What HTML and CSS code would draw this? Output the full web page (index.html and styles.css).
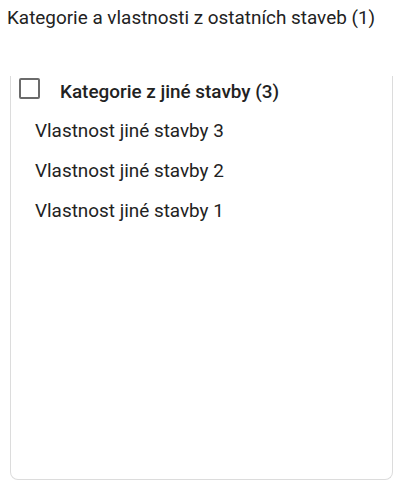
FILE: index.html
```html
<!DOCTYPE html>
<html>
<head>
<meta charset="utf-8">
<link rel="stylesheet" href="styles.css">
</head>
<body>
<div class="title">Kategorie a vlastnosti z ostatních staveb (1)</div>
<div class="panel">
  <div class="group-row">
    <span class="checkbox"></span>
    <span class="group-label">Kategorie z jiné stavby (3)</span>
  </div>
  <div class="item">Vlastnost jiné stavby 3</div>
  <div class="item">Vlastnost jiné stavby 2</div>
  <div class="item">Vlastnost jiné stavby 1</div>
</div>
</body>
</html>
```
FILE: styles.css
```css
html, body {
  margin: 0;
  padding: 0;
  background: #ffffff;
}
body {
  font-family: Roboto, "Liberation Sans", sans-serif;
  color: #222222;
  font-size: 18.9px;
}
.title {
  padding: 7px 0 0 7px;
  line-height: 22px;
  height: 22px;
}
.panel {
  margin: 47px 0 0 10px;
  width: 381px;
  height: 403px;
  border: 1px solid #dcdcdc;
  border-top: none;
  border-radius: 0 0 8px 8px;
}
.group-row {
  display: flex;
  align-items: center;
  height: 26px;
  padding: 0 0 0 8px;
  margin-bottom: 9px;
}
.checkbox {
  width: 17px;
  height: 17px;
  border: 2.5px solid #6b6b6b;
  border-radius: 2px;
  flex: none;
  margin-top: -2px;
}
.group-label {
  margin-left: 20px;
  font-weight: 500;
  padding-top: 4px;
}
.item {
  padding-left: 24px;
  line-height: 40px;
  height: 40px;
}
```
